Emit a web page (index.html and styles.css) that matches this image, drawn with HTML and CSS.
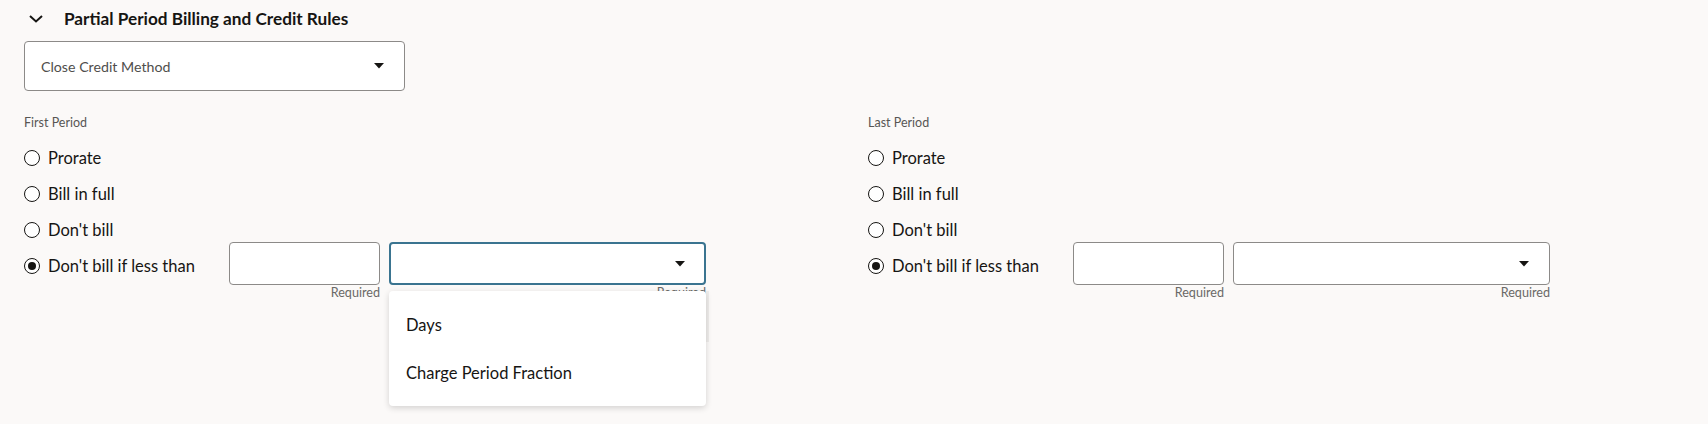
FILE: index.html
```html
<!DOCTYPE html>
<html lang="en">
<head>
<meta charset="utf-8">
<title>Partial Period Billing and Credit Rules</title>
<link rel="stylesheet" href="styles.css">
</head>
<body>
<div class="page">
  <div class="section-header">
    <svg class="chevron" width="14" height="8" viewBox="0 0 14 8"><path d="M1 1 L7 6.5 L13 1" fill="none" stroke="#161513" stroke-width="2"/></svg>
    <h2 class="section-title">Partial Period Billing and Credit Rules</h2>
  </div>

  <div class="select select-main">
    <span class="select-placeholder">Close Credit Method</span>
    <svg class="caret" width="10" height="6" viewBox="0 0 10 6"><path d="M0 0 H10 L5 5.5 Z" fill="#161513"/></svg>
  </div>

  <div class="periods">
    <div class="period">
      <div class="period-label">First Period</div>
      <div class="radio-row"><span class="radio"></span><span class="radio-text">Prorate</span></div>
      <div class="radio-row"><span class="radio"></span><span class="radio-text">Bill in full</span></div>
      <div class="radio-row"><span class="radio"></span><span class="radio-text">Don't bill</span></div>
      <div class="radio-row radio-row-last">
        <div class="radio-label"><span class="radio checked"></span><span class="radio-text">Don't bill if less than</span></div>
        <div class="field field-num">
          <div class="input"></div>
          <div class="help">Required</div>
        </div>
        <div class="field field-unit">
          <div class="input select-small focused">
            <svg class="caret" width="10" height="6" viewBox="0 0 10 6"><path d="M0 0 H10 L5 5.5 Z" fill="#161513"/></svg>
          </div>
          <div class="help">Required</div>
          <div class="popup-edge"></div>
          <div class="popup">
            <div class="option">Days</div>
            <div class="option">Charge Period Fraction</div>
          </div>
        </div>
      </div>
    </div>

    <div class="period">
      <div class="period-label">Last Period</div>
      <div class="radio-row"><span class="radio"></span><span class="radio-text">Prorate</span></div>
      <div class="radio-row"><span class="radio"></span><span class="radio-text">Bill in full</span></div>
      <div class="radio-row"><span class="radio"></span><span class="radio-text">Don't bill</span></div>
      <div class="radio-row radio-row-last">
        <div class="radio-label"><span class="radio checked"></span><span class="radio-text">Don't bill if less than</span></div>
        <div class="field field-num">
          <div class="input"></div>
          <div class="help">Required</div>
        </div>
        <div class="field field-unit">
          <div class="input select-small">
            <svg class="caret" width="10" height="6" viewBox="0 0 10 6"><path d="M0 0 H10 L5 5.5 Z" fill="#161513"/></svg>
          </div>
          <div class="help">Required</div>
        </div>
      </div>
    </div>
  </div>
</div>
</body>
</html>
```

FILE: styles.css
```css
* { box-sizing: border-box; }

html {
  background: #fbf9f8;
}

body {
  margin: 0;
  min-height: 424px;
  background: #fbf9f8;
  color: #161513;
  font-family: Lato, "Noto Sans", "Liberation Sans", sans-serif;
}

.page {
  padding-left: 24px;
  min-height: 424px;
}

.section-header {
  display: flex;
  align-items: center;
  height: 38px;
}

.chevron {
  margin-left: 5px;
  margin-right: 21px;
  flex: none;
}

.section-title {
  margin: 0;
  font-size: 17.2px;
  font-weight: 700;
  line-height: 24px;
}

.select {
  display: flex;
  align-items: center;
  justify-content: space-between;
  background: #fff;
  border: 1px solid #8c8a88;
  border-radius: 4px;
}

.select-main {
  margin-top: 3px;
  width: 381px;
  height: 50px;
  padding: 0 20px 0 16px;
}

.select-placeholder {
  font-size: 14.2px;
  color: #4f4e4c;
}

.periods {
  display: grid;
  grid-template-columns: 844px 1fr;
  margin-top: 24px;
}

.period-label {
  font-size: 12.5px;
  line-height: 16px;
  color: #575654;
  margin-bottom: 9px;
}

.radio-row {
  display: flex;
  align-items: center;
  height: 36px;
}

.radio-row-last {
  align-items: flex-start;
  margin-top: -6px;
  height: auto;
}

.radio-label {
  display: flex;
  align-items: center;
  width: 205px;
  height: 48px;
  flex: none;
}

.radio {
  width: 16px;
  height: 16px;
  border: 1.5px solid #161513;
  border-radius: 50%;
  flex: none;
  margin-right: 8px;
  position: relative;
  background: #fff;
}

.radio.checked::after {
  content: "";
  position: absolute;
  left: 50%;
  top: 50%;
  width: 8px;
  height: 8px;
  margin: -4px 0 0 -4px;
  border-radius: 50%;
  background: #161513;
}

.radio-text {
  font-size: 16.5px;
  line-height: 20px;
}

.field {
  display: flex;
  flex-direction: column;
  align-items: flex-end;
  position: relative;
}

.field-num {
  width: 151px;
  margin-right: 9px;
}

.field-unit {
  width: 317px;
}

.input {
  width: 100%;
  height: 43px;
  background: #fff;
  border: 1px solid #8c8a88;
  border-radius: 4px;
}

.select-small {
  display: flex;
  align-items: center;
  justify-content: flex-end;
  padding-right: 20px;
}

.select-small.focused {
  border: 2px solid #3a7490;
  padding-right: 19px;
}

.help {
  font-size: 12.6px;
  line-height: 16px;
  color: #6a6967;
}

.popup-edge {
  position: absolute;
  left: 100%;
  top: 49px;
  width: 3px;
  height: 51px;
  background: #efedeb;
}

.popup {
  position: absolute;
  left: 0;
  top: 49px;
  width: 317px;
  padding: 10px 0 9px;
  background: #fff;
  border-radius: 4px;
  box-shadow: 0 2px 6px rgba(0, 0, 0, 0.16);
  z-index: 2;
}

.option {
  height: 48px;
  line-height: 48px;
  padding-left: 17px;
  font-size: 16.5px;
}
```
